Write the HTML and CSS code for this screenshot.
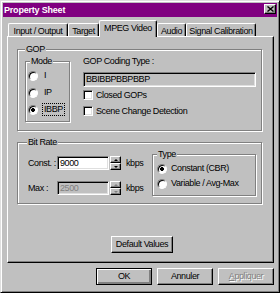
FILE: index.html
```html
<!DOCTYPE html>
<html lang="fr">
  <head>
    <meta charset="UTF-8" />
    <title>Property Sheet</title>
    <link rel="stylesheet" href="styles.css">
  </head>

  <body>
    <div class="window">
      <div class="titlebar">
        <span class="title">Property Sheet</span>
        <span class="close">
          <svg width="7" height="6" viewBox="0 0 7 6">
            <path d="M0.5 0.5L6.5 5.5M6.5 0.5L0.5 5.5" stroke="#000" stroke-width="1.4" fill="none" />
          </svg>
        </span>
      </div>

      <div class="tabs">
        <div class="tab tab-io">Input / Output</div>
        <div class="tab tab-target">Target</div>
        <div class="tab tab-mpeg active">MPEG Video</div>
        <div class="tab tab-audio">Audio</div>
        <div class="tab tab-signal">Signal Calibration</div>
      </div>

      <div class="panel">
        <fieldset class="group gop">
          <legend>GOP</legend>
          <div class="gop-body">
            <fieldset class="group mode">
              <legend>Mode</legend>
              <div class="radio"><span class="dot"></span><span class="radio-text">I</span></div>
              <div class="radio"><span class="dot"></span><span class="radio-text">IP</span></div>
              <div class="radio"><span class="dot checked"></span><span class="radio-text focus">IBBP</span></div>
            </fieldset>
            <div class="coding">
              <div class="coding-label">GOP Coding Type :</div>
              <div class="textbox readonly">BBIBBPBBPBBP</div>
              <div class="check"><span class="box"></span>Closed GOPs</div>
              <div class="check"><span class="box"></span>Scene Change Detection</div>
            </div>
          </div>
        </fieldset>

        <fieldset class="group bitrate">
          <legend>Bit Rate</legend>
          <div class="bitrate-body">
            <div class="rates">
              <div class="rate-row">
                <span class="rate-label">Const. :</span>
                <div class="textbox rate-input">9000</div>
                <div class="spin">
                  <span class="spin-btn"><span class="arrow-up"></span></span>
                  <span class="spin-btn"><span class="arrow-down"></span></span>
                </div>
                <span class="unit">kbps</span>
              </div>
              <div class="rate-row second disabled">
                <span class="rate-label">Max :</span>
                <div class="textbox rate-input readonly">2500</div>
                <div class="spin">
                  <span class="spin-btn"><span class="arrow-up"></span></span>
                  <span class="spin-btn"><span class="arrow-down"></span></span>
                </div>
                <span class="unit">kbps</span>
              </div>
            </div>
            <fieldset class="group type">
              <legend>Type</legend>
              <div class="radio small"><span class="dot checked"></span>Constant (CBR)</div>
              <div class="radio small"><span class="dot"></span>Variable / Avg-Max</div>
            </fieldset>
          </div>
        </fieldset>

        <div class="defaults">
          <button class="btn btn-defaults">Default Values</button>
        </div>
      </div>

      <div class="actions">
        <button class="btn btn-default">OK</button>
        <button class="btn">Annuler</button>
        <button class="btn btn-disabled"><u>A</u>ppliquer</button>
      </div>
    </div>
  </body>
</html>
```

FILE: styles.css
```css
* {
  box-sizing: border-box;
}

body {
  margin: 0;
  padding: 0;
  background-color: #c0c0c0;
  color: #000;
  font-family: "Liberation Sans", Arial, sans-serif;
  font-size: 9px;
  line-height: 11px;
  letter-spacing: -0.4px;
  white-space: nowrap;
}

.window {
  width: 280px;
  height: 293px;
  padding: 2px;
  border: 1px solid;
  border-color: #dfdfdf #000 #000 #dfdfdf;
  box-shadow: inset 1px 1px #fff, inset -1px -1px #808080;
}

/* Title bar */
.titlebar {
  height: 14px;
  padding: 0 1px 0 1px;
  background-color: #800080;
  display: flex;
  justify-content: space-between;
  align-items: flex-start;
}

.title {
  color: #fff;
  font-weight: bold;
  font-size: 9px;
  letter-spacing: -0.2px;
  line-height: 14px;
}

.close {
  width: 12px;
  height: 10px;
  margin-top: 1px;
  background-color: #c0c0c0;
  border: 1px solid;
  border-color: #fff #000 #000 #fff;
  box-shadow: inset -1px -1px #808080;
  display: flex;
  align-items: center;
  justify-content: center;
}

.close svg {
  display: block;
}

/* Tabs */
.tabs {
  height: 19px;
  padding-left: 5px;
  display: flex;
  align-items: flex-end;
}

.tab {
  height: 13px;
  padding-top: 2px;
  text-align: center;
  border-top: 1px solid #fff;
  border-left: 1px solid #fff;
  border-right: 1px solid #000;
  border-radius: 2px 2px 0 0;
  box-shadow: inset -1px 0 #808080;
}

.tab-io { width: 60px; }
.tab-target { width: 31px; }
.tab-mpeg { width: 58px; }
.tab-audio { width: 29px; }
.tab-signal { width: 70px; }

.tab.active {
  height: 17px;
  margin-bottom: -1px;
  padding-top: 2px;
  background-color: #c0c0c0;
  position: relative;
  z-index: 1;
}

/* Tab page */
.panel {
  height: 227px;
  margin: 0 3px 0 4px;
  padding: 0 0 0 9px;
  border: 1px solid;
  border-color: #fff #000 #000 #fff;
  box-shadow: inset -1px -1px #808080;
}

.group {
  margin: 0;
  min-width: 0;
  border: 1px solid #808080;
  box-shadow: inset 1px 1px #fff, 1px 1px #fff;
}

.group legend {
  padding: 0 1px;
  background-color: #c0c0c0;
  line-height: 11px;
}

.gop {
  width: 245px;
  margin-top: 7px;
  padding: 1px 0 8px 7px;
}

.gop-body {
  display: flex;
  align-items: flex-start;
}

.mode {
  width: 45px;
  padding: 0 0 3px 2px;
}

.mode legend {
  margin-left: 2px;
}

.radio {
  height: 17px;
  display: flex;
  align-items: center;
}

.radio.small {
  height: 15px;
}

.dot {
  width: 10px;
  height: 10px;
  flex: none;
  margin-right: 4px;
  border-radius: 50%;
  border: 1px solid;
  border-color: #808080 #fff #fff #808080;
  background-color: #fff;
  box-shadow: inset 1px 1px #000;
}

.dot.checked {
  background: radial-gradient(circle at 50% 50%, #000 0, #000 1.6px, #fff 2.2px);
}

.radio-text {
  padding: 0 1px;
  border: 1px solid transparent;
}

.radio-text.focus {
  border: 1px dotted #000;
}

/* GOP coding type */
.coding {
  width: 173px;
  margin-left: 13px;
}

.textbox {
  height: 15px;
  margin-top: 5px;
  padding: 1px 0 0 2px;
  border: 1px solid;
  border-color: #808080 #fff #fff #808080;
  box-shadow: inset 1px 1px #000, inset -1px -1px #dfdfdf;
  background-color: #fff;
}

.textbox.readonly {
  background-color: #c0c0c0;
}

.check {
  height: 16px;
  display: flex;
  align-items: center;
}

.coding .check:first-of-type {
  margin-top: 7px;
}

.box {
  width: 10px;
  height: 10px;
  margin-right: 3px;
  border: 1px solid;
  border-color: #808080 #fff #fff #808080;
  box-shadow: inset 1px 1px #000, inset -1px -1px #dfdfdf;
  background-color: #fff;
}

/* Bit rate */
.bitrate {
  width: 245px;
  margin-top: 6px;
  padding: 1px 0 7px 9px;
}

.bitrate-body {
  display: flex;
  align-items: flex-start;
}

.rates {
  width: 125px;
}

.rate-row {
  height: 14px;
  margin-top: 7px;
  display: flex;
  align-items: center;
}

.rate-row.second {
  margin-top: 11px;
}

.rate-label {
  width: 30px;
  padding-left: 1px;
}

.rate-input {
  width: 52px;
  height: 14px;
  margin-top: 0;
  padding-top: 1px;
}

.disabled .rate-input {
  color: #808080;
}

.spin {
  width: 11px;
  height: 14px;
  margin-left: 1px;
  display: flex;
  flex-direction: column;
}

.spin-btn {
  height: 7px;
  border: 1px solid;
  border-color: #fff #000 #000 #fff;
  box-shadow: inset -1px -1px #808080;
  display: flex;
  align-items: center;
  justify-content: center;
}

.arrow-up {
  border-left: 2px solid transparent;
  border-right: 2px solid transparent;
  border-bottom: 2px solid #000;
}

.arrow-down {
  border-left: 2px solid transparent;
  border-right: 2px solid transparent;
  border-top: 2px solid #000;
}

.disabled .arrow-up {
  border-bottom-color: #808080;
}

.disabled .arrow-down {
  border-top-color: #808080;
}

.unit {
  margin-left: 5px;
}

.type {
  width: 104px;
  padding: 1px 0 4px 4px;
}

/* Buttons */
.btn {
  height: 17px;
  padding: 0;
  font-family: inherit;
  font-size: 9px;
  letter-spacing: -0.4px;
  line-height: 11px;
  color: #000;
  background-color: #c0c0c0;
  border: 1px solid;
  border-color: #fff #000 #000 #fff;
  box-shadow: inset -1px -1px #808080;
  white-space: nowrap;
}

.defaults {
  margin-top: 32px;
  padding-left: 94px;
}

.btn-defaults {
  width: 62px;
}

.actions {
  margin-top: 5px;
  padding-right: 3px;
  display: flex;
  justify-content: flex-end;
  gap: 5px;
}

.actions .btn {
  width: 56px;
}

.btn-default {
  border-color: #000;
  box-shadow: inset 1px 1px #fff, inset -2px -2px #808080;
}

.btn-disabled {
  color: #808080;
  text-shadow: 1px 1px #fff;
}
```
